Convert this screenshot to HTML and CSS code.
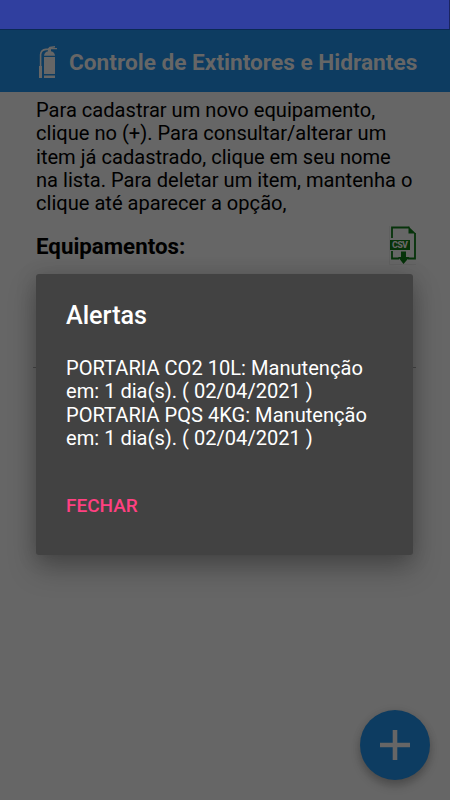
FILE: index.html
```html
<!DOCTYPE html>
<html lang="pt-BR">
<head>
<meta charset="utf-8">
<title>Controle de Extintores e Hidrantes</title>
<link rel="stylesheet" href="styles.css">
</head>
<body>
<div class="status"></div>
<header class="bar">
  <svg class="logo" width="20" height="34" viewBox="0 0 20 34">
    <path d="M1.6 21V8.5Q2 4 7 3.4H11" fill="none" stroke="currentColor" stroke-width="1.6"/>
    <path d="M0 20h3v12H0zM5 11h11v17H5zM5 29.5h11V32H5zM5 9.7Q5.5 6 9 5.3V2.5L10.5.8 16 0v1.5l-3 .4 5 .2v1.1h-6v2.1Q15.7 6 16 9.7z" fill="currentColor"/>
  </svg>
  <h1 class="title">Controle de Extintores e Hidrantes</h1>
</header>
<main class="content">
  <p class="intro">Para cadastrar um novo equipamento,<br>clique no (+). Para consultar/alterar um<br>item já cadastrado, clique em seu nome<br>na lista. Para deletar um item, mantenha o<br>clique até aparecer a opção,</p>
  <div class="heading">
    <h2 class="subtitle">Equipamentos:</h2>
    <svg class="csv" width="28" height="40" viewBox="0 0 28 40">
      <path d="M.5 0v38.5H27" fill="none" stroke="#606060"/>
      <path d="M3 12V1.5h17.5M26 7v25.5h-7M3 25v7.5h7" fill="none" stroke="#06330a" stroke-width="1.8"/>
      <path d="M19.5 .6l7.4 6.9h-7.4zM1 14h20v10H1zM12 25.5h5v5.5h3.5l-6 7-5.5-7h3z" fill="#06330a"/>
      <text class="csv-label" x="11" y="22.4" text-anchor="middle" textLength="16">CSV</text>
    </svg>
  </div>
  <div class="divider"></div>
</main>
<section class="dialog" role="dialog">
  <h2 class="dialog-title">Alertas</h2>
  <p class="message">PORTARIA CO2 10L: Manutenção<br>em: 1 dia(s). ( 02/04/2021 )<br>PORTARIA PQS 4KG: Manutenção<br>em: 1 dia(s). ( 02/04/2021 )</p>
  <button class="close">FECHAR</button>
</section>
<button class="fab" aria-label="Adicionar">
  <svg width="30" height="30" viewBox="0 0 30 30"><path d="M15 0v30M0 15h30" stroke="#666" stroke-width="4.6"/></svg>
</button>
</body>
</html>
```
FILE: styles.css
```css
* { box-sizing: border-box; }
body {
  position: relative;
  margin: 0;
  width: 450px;
  height: 800px;
  overflow: hidden;
  background: #666;
  color: #000;
  font-family: Roboto, sans-serif;
}
h1, h2, p { margin: 0; white-space: nowrap; }
button { border: 0; padding: 0; font-family: inherit; }
.status { height: 29px; background: #303f9f; border-right: 1px solid #1b2460; }
.bar {
  display: flex;
  align-items: center;
  height: 63px;
  padding-left: 39px;
  background: #0d3c61;
  border-top: 1px solid #0b2954;
  color: #666;
}
.logo { flex: none; margin-top: 3px; }
.title { margin-left: 10px; margin-top: 3px; font-size: 22.65px; line-height: 28px; font-weight: 700; }
.content { padding: 7px 33px 0; }
.intro { margin-left: 3px; font-size: 20.1px; line-height: 23.3px; }
.heading { display: flex; justify-content: space-between; height: 40px; margin: 10.5px 0 0 3px; }
.subtitle { margin-top: 7px; font-size: 22.3px; line-height: 26px; font-weight: 700; }
.csv { flex: none; }
.csv-label { font-size: 9px; font-weight: 900; fill: #666; }
.divider { width: 383px; height: 1px; margin-top: 101px; background: #484848; }
.dialog {
  position: absolute;
  left: 36px;
  top: 274px;
  width: 377px;
  height: 281px;
  padding: 26px 30px 0;
  border-radius: 3px;
  background: #424242;
  color: #fff;
  box-shadow: 0 14px 28px rgba(0, 0, 0, .25), 0 2px 20px rgba(0, 0, 0, .17);
}
.dialog-title { font-size: 25.2px; line-height: 32px; font-weight: 500; }
.message { margin-top: 25px; font-size: 20.1px; line-height: 23.4px; }
.close {
  display: block;
  margin-top: 43px;
  background: none;
  color: #ff4081;
  font-size: 19px;
  line-height: 24px;
  font-weight: 500;
}
.fab {
  position: absolute;
  left: 360px;
  top: 710px;
  width: 70px;
  height: 70px;
  display: flex;
  align-items: center;
  justify-content: center;
  border-radius: 50%;
  background: #0d3c61;
  box-shadow: 0 6px 10px rgba(0, 0, 0, .22), 0 1px 8px rgba(0, 0, 0, .1);
}
```
